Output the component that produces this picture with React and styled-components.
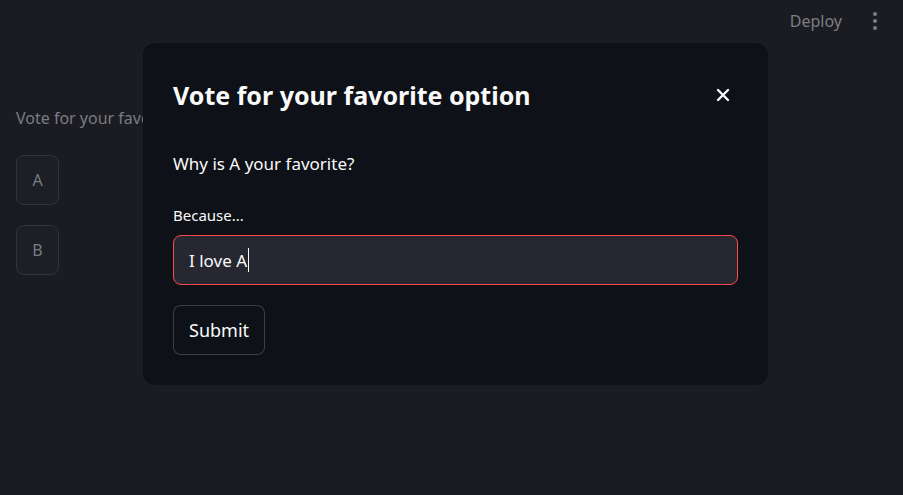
import React from 'react';
import styled, { createGlobalStyle } from 'styled-components';

const Global = createGlobalStyle`
  html, body { margin: 0; padding: 0; background: #1b1c21; }
  body { font-family: "Noto Sans", "Open Sans", sans-serif; }
  * { box-sizing: border-box; }
`;

const Page = styled.div`
  position: relative;
  width: 903px;
  height: 495px;
  background: #1b1c21;
  overflow: hidden;
`;

const Header = styled.div`
  display: flex;
  justify-content: flex-end;
  align-items: center;
  height: 42px;
  padding-right: 26px;
  gap: 31px;
`;

const Deploy = styled.span`
  color: #7d7e82;
  font-size: 16px;
`;

const Kebab = styled.div`
  display: flex;
  flex-direction: column;
  gap: 3px;
  span {
    width: 4px;
    height: 4px;
    border-radius: 50%;
    background: #7d7e82;
  }
`;

const Main = styled.div`
  padding: 65px 16px 0;
  display: flex;
  flex-direction: column;
  align-items: flex-start;
  gap: 20px;
`;

const Label = styled.div`
  color: #7a7b80;
  font-size: 16px;
  margin-bottom: 6px;
`;

const OptionButton = styled.button`
  width: 43px;
  height: 50px;
  border-radius: 8px;
  border: 1px solid #323339;
  background: #1e1f24;
  color: #7a7b80;
  font-family: inherit;
  font-size: 16px;
`;

const Dialog = styled.div`
  position: absolute;
  left: 143px;
  top: 43px;
  width: 625px;
  height: 342px;
  background: #0e1117;
  border-radius: 12px;
  padding: 35px 30px 30px;
  color: #fafafa;
`;

const TitleRow = styled.div`
  display: flex;
  justify-content: space-between;
  align-items: center;
  margin-bottom: 40px;
`;

const Title = styled.h2`
  margin: 0;
  font-size: 25px;
  font-weight: 700;
`;

const Close = styled.button`
  background: none;
  border: none;
  padding: 0;
  margin-right: 8px;
  color: #fafafa;
  display: flex;
`;

const Question = styled.p`
  margin: 0 0 30px;
  font-size: 17px;
`;

const FieldLabel = styled.div`
  font-size: 15px;
  margin-bottom: 10px;
`;

const Input = styled.div`
  height: 50px;
  border: 1px solid #ff4b4b;
  border-radius: 8px;
  background: #262730;
  display: flex;
  align-items: center;
  padding-left: 15px;
  font-size: 17px;
  margin-bottom: 20px;
`;

const Caret = styled.span`
  display: inline-block;
  width: 1px;
  height: 24px;
  background: #fafafa;
  margin-left: 1px;
`;

const Submit = styled.button`
  height: 50px;
  padding: 0 15px;
  border-radius: 8px;
  border: 1px solid rgba(250, 250, 250, 0.2);
  background: #0e1117;
  color: #fafafa;
  font-family: inherit;
  font-size: 18px;
`;

export default function App() {
  return (
    <Page>
      <Global />
      <Header>
        <Deploy>Deploy</Deploy>
        <Kebab><span /><span /><span /></Kebab>
      </Header>
      <Main>
        <Label>Vote for your favorite</Label>
        <OptionButton>A</OptionButton>
        <OptionButton>B</OptionButton>
      </Main>
      <Dialog>
        <TitleRow>
          <Title>Vote for your favorite option</Title>
          <Close>
            <svg width="14" height="14" viewBox="0 0 14 14">
              <path d="M2 2L12 12M12 2L2 12" stroke="#fafafa" strokeWidth="2.4" strokeLinecap="round" />
            </svg>
          </Close>
        </TitleRow>
        <Question>Why is A your favorite?</Question>
        <FieldLabel>Because...</FieldLabel>
        <Input>I love A<Caret /></Input>
        <Submit>Submit</Submit>
      </Dialog>
    </Page>
  );
}
